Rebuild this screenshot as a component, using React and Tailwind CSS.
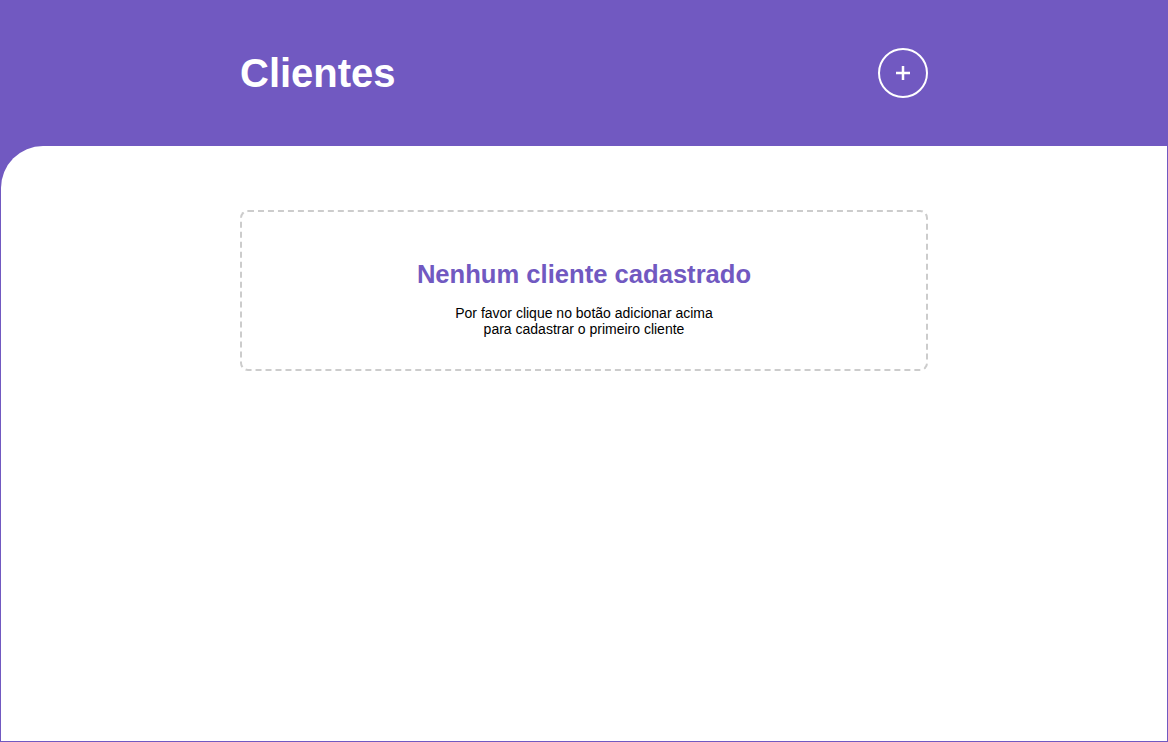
import React from 'react'

const font = { fontFamily: '"Liberation Sans", Arial, sans-serif' }

const PlusIcon = () => (
  <svg width="18" height="18" viewBox="0 0 18 18" fill="none" stroke="white" strokeWidth="2.5">
    <line x1="9" y1="2" x2="9" y2="16" />
    <line x1="2" y1="9" x2="16" y2="9" />
  </svg>
)

export default function App() {
  return (
    <div className="h-screen flex flex-col bg-[#7159c1] px-px pb-px" style={font}>
      {/* Header */}
      <header className="h-[146px] shrink-0">
        <div className="mx-auto w-[688px] h-full flex items-center justify-between">
          <h1 className="text-[40px] font-bold text-white leading-[46px]">Clientes</h1>
          <button className="w-[50px] h-[50px] rounded-full border-2 border-white flex items-center justify-center">
            <PlusIcon />
          </button>
        </div>
      </header>

      {/* Content */}
      <main className="flex-1 bg-white rounded-tl-[42px]">
        <div className="mx-auto w-[688px] pt-16">
          <div className="border-2 border-dashed border-[#cccccc] rounded-lg pt-[47px] pb-[32px] flex flex-col items-center text-center">
            <h2 className="text-[25.6px] font-bold text-[#7159c1] leading-[30px]">Nenhum cliente cadastrado</h2>
            <p className="mt-4 text-[14px] leading-4 text-black">
              Por favor clique no botão adicionar acima
              <br />
              para cadastrar o primeiro cliente
            </p>
          </div>
        </div>
      </main>
    </div>
  )
}
